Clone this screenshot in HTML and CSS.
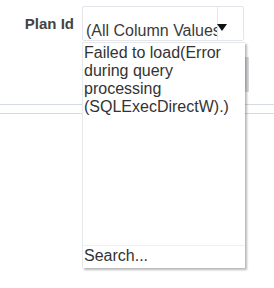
FILE: index.html
```html
<!DOCTYPE html>
<html>
<head>
<meta charset="utf-8">
<link rel="stylesheet" href="styles.css">
</head>
<body>
<div class="page">
  <div class="prompt-row">
    <label class="prompt-label">Plan Id</label>
    <div class="select">
      <span class="select-value">(All Column Values)</span>
      <span class="select-button"><span class="arrow"></span></span>
    </div>
  </div>
  <div class="side-edge"></div>
  <div class="rule"></div>
  <div class="rule rule-second"></div>

  <div class="dropdown">
    <div class="dropdown-body">Failed to load(Error during query processing (SQLExecDirectW).)</div>
    <div class="dropdown-search">Search...</div>
  </div>
</div>
</body>
</html>
```
FILE: styles.css
```css
html, body {
  margin: 0;
  padding: 0;
  background: #ffffff;
}
.page {
  position: relative;
  width: 274px;
  height: 288px;
  overflow: hidden;
  font-family: "Liberation Sans", Arial, sans-serif;
  color: #333333;
}
.prompt-row {
  display: flex;
  align-items: flex-start;
  padding-top: 6px;
}
.prompt-label {
  width: 82px;
  padding-top: 9px;
  padding-right: 8px;
  text-align: right;
  font-weight: bold;
  font-size: 15px;
  color: #444444;
  box-sizing: border-box;
  line-height: 18px;
  white-space: nowrap;
}
.select {
  display: flex;
  width: 162px;
  height: 35px;
  border: 1px solid #e3e7eb;
  border-radius: 2px;
  box-sizing: border-box;
}
.select-value {
  width: 134px;
  overflow: hidden;
  white-space: nowrap;
  font-size: 16px;
  line-height: 18px;
  padding: 15px 0 0 3px;
  box-sizing: border-box;
  color: #3a3a3a;
}
.select-button {
  flex: 1;
  border-left: 1px solid #e3e7eb;
  display: flex;
  padding-top: 17px;
  box-sizing: border-box;
}
.arrow {
  width: 0;
  height: 0;
  margin-left: -1px;
  border-left: 5px solid transparent;
  border-right: 5px solid transparent;
  border-top: 7px solid #111111;
}
.side-edge {
  margin: 16px 0 0 245px;
  width: 4px;
  height: 35px;
  background: #d8dadd;
  border-radius: 1px;
}
.rule {
  margin-top: 12px;
  height: 1px;
  background: #d5dbe1;
}
.rule-second {
  margin-top: 8px;
}
.dropdown {
  position: absolute;
  left: 82px;
  top: 42px;
  width: 163px;
  height: 226px;
  background: #ffffff;
  border: 1px solid #e6e9ec;
  border-right: none;
  border-bottom: none;
  box-sizing: border-box;
  box-shadow: 2px 2px 2px rgba(0, 0, 0, 0.28);
  display: flex;
  flex-direction: column;
}
.dropdown-body {
  flex: 1;
  font-size: 16px;
  line-height: 18px;
  padding: 1px 6px 0 1px;
  color: #333333;
}
.dropdown-search {
  height: 21px;
  border-top: 1px solid #eceff3;
  font-size: 16px;
  line-height: 18px;
  padding: 1px 0 0 1px;
  color: #333333;
}
```
